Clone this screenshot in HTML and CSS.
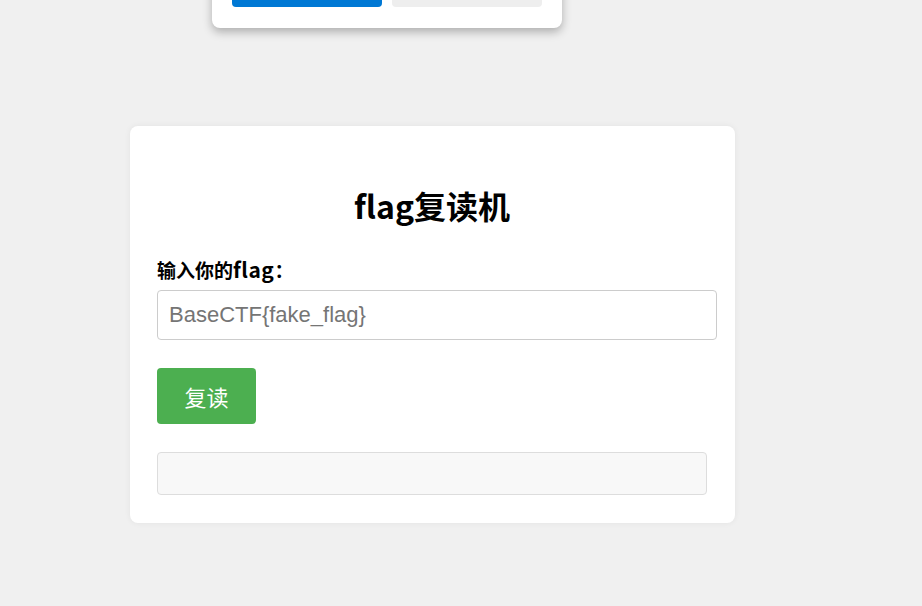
FILE: index.html
```html
<!DOCTYPE html>
<html lang="zh-CN">
<head>
<meta charset="utf-8">
<title>flag复读机</title>
<link rel="stylesheet" href="styles.css">
</head>
<body>
<div class="dialog">
  <div class="dialog-actions">
    <span class="dlg-btn dlg-primary"></span>
    <span class="dlg-btn dlg-secondary"></span>
  </div>
</div>
<main class="page">
  <section class="card">
    <h1 class="title">flag复读机</h1>
    <label class="label" for="flag">输入你的<span class="latin">flag</span>：</label>
    <input class="input" id="flag" type="text" placeholder="BaseCTF{fake_flag}">
    <button class="btn" type="button">复读</button>
    <div class="result"></div>
  </section>
</main>
</body>
</html>
```

FILE: styles.css
```css
html, body {
  margin: 0;
  padding: 0;
}
body {
  background: #f0f0f0;
  width: 922px;
  height: 606px;
  overflow: hidden;
  font-family: "Noto Sans CJK SC", "Liberation Sans", sans-serif;
  position: relative;
}
.dialog {
  position: absolute;
  left: 212px;
  top: -40px;
  width: 350px;
  height: 68px;
  background: #fff;
  border-radius: 8px;
  box-shadow: 0 4px 10px rgba(0,0,0,0.28);
  box-sizing: border-box;
  padding: 0 20px 21px 20px;
  display: flex;
  align-items: flex-end;
}
.dialog-actions {
  display: flex;
  gap: 10px;
  width: 100%;
}
.dlg-btn {
  display: block;
  flex: 1;
  height: 30px;
  border-radius: 4px;
}
.dlg-primary { background: #0078d4; }
.dlg-secondary { background: #eeeeee; }

.page {
  padding: 126px 0 0 130px;
}
.card {
  width: 605px;
  height: 397px;
  box-sizing: border-box;
  background: #fff;
  border-radius: 8px;
  box-shadow: 0 0 6px rgba(0,0,0,0.06);
  padding: 55px 28px 28px 27px;
  display: flex;
  flex-direction: column;
  align-items: flex-start;
}
.title {
  align-self: stretch;
  text-align: center;
  font-size: 32px;
  font-weight: 700;
  line-height: 48px;
  margin: 0 0 27px 0;
  color: #000;
  font-family: "Noto Sans CJK SC", "Liberation Sans", sans-serif;
}
.label {
  font-size: 19px;
  font-weight: 700;
  line-height: 26px;
  color: #000;
  margin: 0 0 7px 0;
}
.latin {
  font-size: 21px;
  letter-spacing: 0.5px;
}
.input {
  width: 560px;
  height: 50px;
  box-sizing: border-box;
  border: 1px solid #cccccc;
  border-radius: 4px;
  padding: 0 11px;
  font-size: 22px;
  font-family: "Liberation Sans", Arial, sans-serif;
  color: #000;
  margin: 0 0 28px 0;
  outline: none;
}
.input::placeholder {
  color: #757575;
}
.btn {
  width: 99px;
  height: 56px;
  background: #4caf50;
  color: #fff;
  border: none;
  border-radius: 4px;
  font-size: 22px;
  font-family: "Noto Sans CJK SC", sans-serif;
  padding: 0;
  margin: 0 0 28px 0;
}
.result {
  width: 550px;
  height: 43px;
  box-sizing: border-box;
  background: #f8f8f8;
  border: 1px solid #dddddd;
  border-radius: 4px;
}
```
